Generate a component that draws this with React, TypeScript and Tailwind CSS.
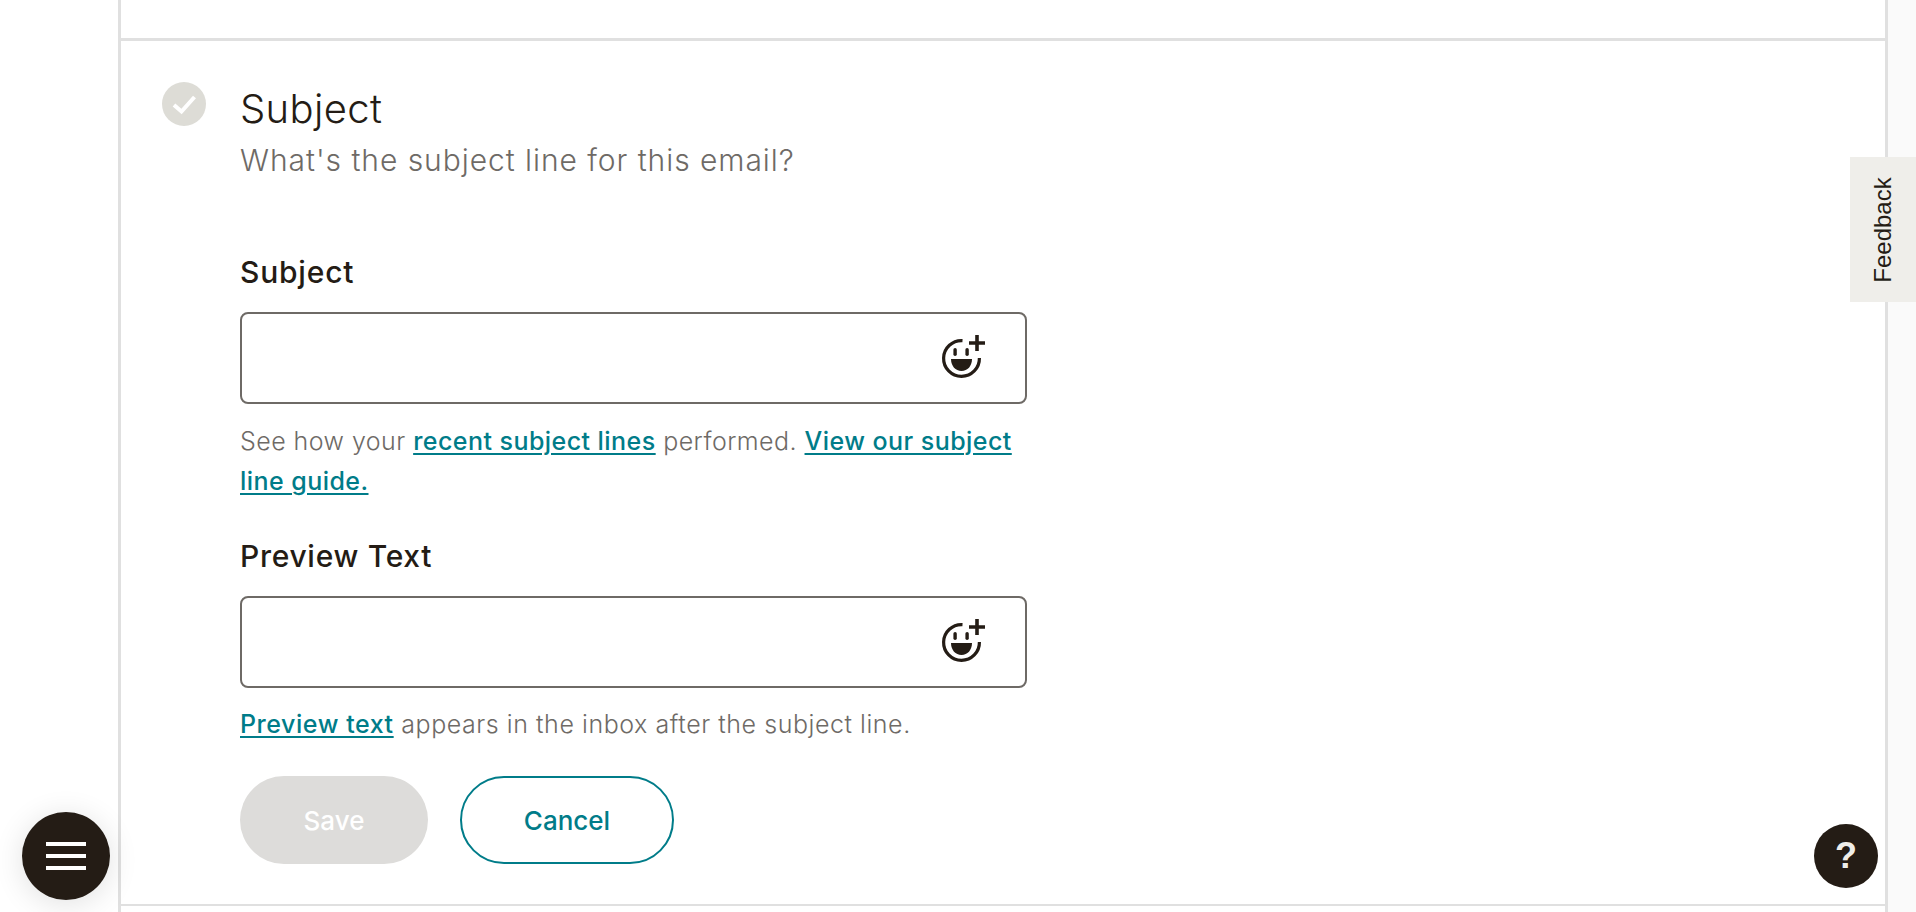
import React from "react";

function SmileyPlus() {
  return (
    <svg width="46" height="46" viewBox="0 0 46 46" fill="none" className="text-[#241c15]">
      <path d="M21.500 5.600A17.900 17.900 0 1 0 38.400 23" stroke="currentColor" strokeWidth="3.200" />
      <path d="M36 0v16M28 8h16" stroke="currentColor" strokeWidth="3.600" />
      <rect x="12.400" y="13" width="3.400" height="8" rx="1.700" fill="currentColor" />
      <rect x="24.400" y="13" width="3.400" height="8" rx="1.700" fill="currentColor" />
      <path d="M10 24h21c0 7-4.500 12-10.500 12S10 31 10 24z" fill="currentColor" />
    </svg>
  );
}

function EmojiInput() {
  return (
    <div className="flex h-[92px] w-[787px] items-center justify-end rounded-[8px] border-2 border-[#6e6a66] bg-white pr-[38px]">
      <SmileyPlus />
    </div>
  );
}

function TextLink(props: { children: React.ReactNode }) {
  return (
    <a href="#" className="font-medium text-[#007c89] underline decoration-2 underline-offset-[3px]">
      {props.children}
    </a>
  );
}

export default function App() {
  return (
    <div className="relative flex h-[912px] w-[1916px] overflow-hidden bg-white font-['Inter',sans-serif] text-[#241c15]">
      <div className="w-[118px] shrink-0" />
      <main className="w-[1770px] shrink-0 border-x-[3px] border-[#e0e0e0] bg-white">
        <div className="box-content h-[38px] border-b-[3px] border-[#e0e0e0]" />
        <section className="flex h-[865px] border-b-[2px] border-[#e0e0e0] pl-[41px] pt-[41px]">
          <div className="flex h-[44px] w-[44px] shrink-0 items-center justify-center rounded-full bg-[#dddcd6]">
            <svg width="24" height="24" viewBox="0 0 24 24" fill="none">
              <path d="M2 13l7.500 6.500L22.500 5" stroke="white" strokeWidth="4" />
            </svg>
          </div>
          <div className="ml-[34px] w-[787px]">
            <h2 className="mt-[2px] text-[40px] leading-[50px] font-light tracking-[0.35px]">Subject</h2>
            <p className="mt-[7px] text-[30px] leading-[38px] font-light tracking-[0.95px] text-[#6e6a66]">What's the subject line for this email?</p>
            <label className="mt-[73px] block text-[30px] leading-[40px] font-medium tracking-[0.8px]">Subject</label>
            <div className="mt-[20px]">
              <EmojiInput />
            </div>
            <p className="mt-[17px] text-[25px] leading-[40px] font-light tracking-[0.45px] text-[#6e6a66]">
              See how your <TextLink>recent subject lines</TextLink> performed. <TextLink>View our subject line guide.</TextLink>
            </p>
            <label className="mt-[35px] block text-[30px] leading-[40px] font-medium tracking-[0.7px]">Preview Text</label>
            <div className="mt-[20px]">
              <EmojiInput />
            </div>
            <p className="mt-[16px] text-[25px] leading-[40px] font-light tracking-[0.55px] text-[#6e6a66]">
              <TextLink>Preview text</TextLink> appears in the inbox after the subject line.
            </p>
            <div className="mt-[32px] flex gap-[32px]">
              <button className="h-[88px] w-[188px] rounded-full bg-[#dddcda] text-[26px] font-medium text-white">Save</button>
              <button className="h-[88px] w-[214px] rounded-full border-2 border-[#007c89] text-[26px] font-medium text-[#007c89]">Cancel</button>
            </div>
          </div>
        </section>
      </main>
      <div className="flex-1 bg-[#fafafa]" />
      <div className="absolute right-0 top-[157px] flex h-[145px] w-[66px] items-center justify-center bg-[#efeeea]">
        <span className="-rotate-90 whitespace-nowrap font-['Liberation_Sans',sans-serif] text-[24px]">Feedback</span>
      </div>
      <button className="absolute left-[22px] top-[812px] flex h-[88px] w-[88px] flex-col items-center justify-center gap-[8px] rounded-full bg-[#241c15] shadow-[0_4px_30px_rgba(0,0,0,0.12)]">
        <span className="h-[4px] w-[40px] bg-white" />
        <span className="h-[4px] w-[40px] bg-white" />
        <span className="h-[4px] w-[40px] bg-white" />
      </button>
      <button className="absolute left-[1814px] top-[824px] flex h-[64px] w-[64px] items-center justify-center rounded-full bg-[#241c15] font-['Liberation_Sans',sans-serif] text-[36px] font-bold text-[#efeeea]">?</button>
    </div>
  );
}
